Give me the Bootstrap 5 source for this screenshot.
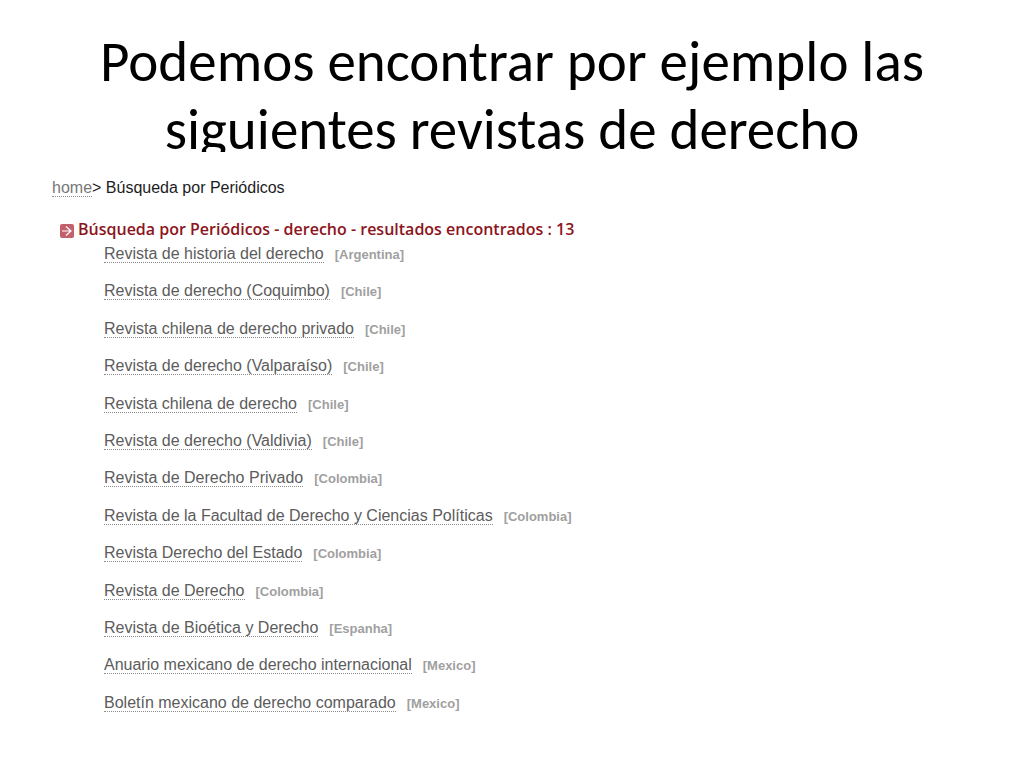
<!DOCTYPE html>
<html lang="es">
<head>
<meta charset="utf-8">
<meta name="viewport" content="width=device-width, initial-scale=1">
<title>Revistas de derecho</title>
<link href="https://cdn.jsdelivr.net/npm/bootstrap@5.3.0/dist/css/bootstrap.min.css" rel="stylesheet">
<style>
  body { background: #fff; color: #000; font-family: Arial, "Liberation Sans", sans-serif; font-size: 16px; line-height: 20px; }
  .slide-title { font-family: Calibri, Carlito, Lato, sans-serif; font-size: 57px; line-height: 68px; height: 128px; overflow: hidden; font-weight: 400; }
  .slide-body { padding: 26px 52px 54px; }
  .crumbs { color: #1c1c24; margin-bottom: 20px; }
  .dotted { color: #5c5c5c; text-decoration: none; border-bottom: 1px dotted #8c8c8c; }
  .crumbs .dotted { color: #777; }
  .results-title { font-family: "Trebuchet MS", "Open Sans", sans-serif; font-size: 16px; line-height: 22px; font-weight: 600; color: #8c1420; }
  .journals { padding: 4px 0 0 52px; }
  .country { color: #a0a0a0; font-size: 13px; font-weight: 700; margin-left: 11px; }
</style>
</head>
<body>
<main class="min-vh-100 d-flex flex-column">
  <h1 class="slide-title text-center mb-0 mt-4 px-5 pt-1">Podemos encontrar por ejemplo las<br>siguientes revistas de derecho</h1>
  <div class="slide-body flex-grow-1 d-flex flex-column">
    <nav class="crumbs" aria-label="Ruta"><a class="dotted" href="#">home</a>&gt; Búsqueda por Periódicos</nav>
    <h2 class="results-title d-flex align-items-center mb-0 ms-2"><svg class="me-1 mt-1" width="14" height="14" viewBox="0 0 14 14" aria-hidden="true"><rect width="14" height="14" rx="2" fill="#c4606b"/><path d="M2 7h9M6 2.5l5 4.5-5 4.5" fill="none" stroke="#fff" stroke-width="1.2"/></svg>Búsqueda por Periódicos - derecho - resultados encontrados : 13</h2>
    <ul class="journals list-unstyled mb-0 flex-grow-1 d-flex flex-column justify-content-between">
      <li><a class="dotted" href="#">Revista de historia del derecho</a><span class="country">[Argentina]</span></li>
      <li><a class="dotted" href="#">Revista de derecho (Coquimbo)</a><span class="country">[Chile]</span></li>
      <li><a class="dotted" href="#">Revista chilena de derecho privado</a><span class="country">[Chile]</span></li>
      <li><a class="dotted" href="#">Revista de derecho (Valparaíso)</a><span class="country">[Chile]</span></li>
      <li><a class="dotted" href="#">Revista chilena de derecho</a><span class="country">[Chile]</span></li>
      <li><a class="dotted" href="#">Revista de derecho (Valdivia)</a><span class="country">[Chile]</span></li>
      <li><a class="dotted" href="#">Revista de Derecho Privado</a><span class="country">[Colombia]</span></li>
      <li><a class="dotted" href="#">Revista de la Facultad de Derecho y Ciencias Políticas</a><span class="country">[Colombia]</span></li>
      <li><a class="dotted" href="#">Revista Derecho del Estado</a><span class="country">[Colombia]</span></li>
      <li><a class="dotted" href="#">Revista de Derecho</a><span class="country">[Colombia]</span></li>
      <li><a class="dotted" href="#">Revista de Bioética y Derecho</a><span class="country">[Espanha]</span></li>
      <li><a class="dotted" href="#">Anuario mexicano de derecho internacional</a><span class="country">[Mexico]</span></li>
      <li><a class="dotted" href="#">Boletín mexicano de derecho comparado</a><span class="country">[Mexico]</span></li>
    </ul>
  </div>
</main>
<script src="https://cdn.jsdelivr.net/npm/bootstrap@5.3.0/dist/js/bootstrap.bundle.min.js"></script>
</body>
</html>
